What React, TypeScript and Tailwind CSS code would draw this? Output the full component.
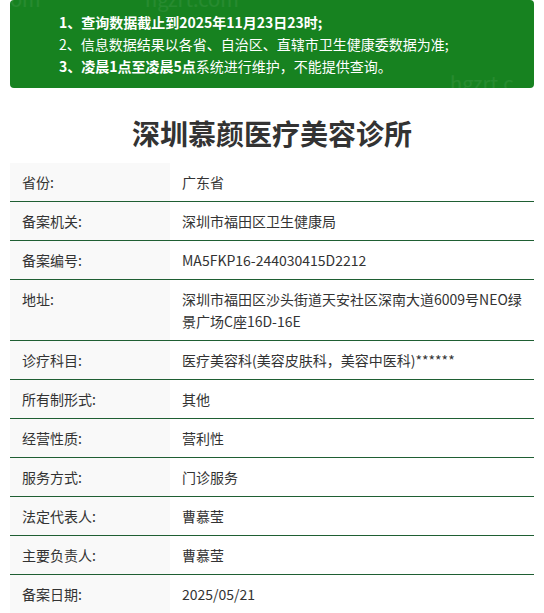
import React from "react";

const rows: [string, string][] = [
  ["省份:", "广东省"],
  ["备案机关:", "深圳市福田区卫生健康局"],
  ["备案编号:", "MA5FKP16-244030415D2212"],
  ["地址:", "深圳市福田区沙头街道天安社区深南大道6009号NEO绿景广场C座16D-16E"],
  ["诊疗科目:", "医疗美容科(美容皮肤科，美容中医科)******"],
  ["所有制形式:", "其他"],
  ["经营性质:", "营利性"],
  ["服务方式:", "门诊服务"],
  ["法定代表人:", "曹慕莹"],
  ["主要负责人:", "曹慕莹"],
  ["备案日期:", "2025/05/21"],
];

export default function App() {
  return (
    <div
      className="w-[544px] h-[613px] overflow-hidden bg-white"
      style={{ fontFamily: '"Noto Sans CJK SC", "Noto Sans", sans-serif' }}
    >
      <div className="px-[10px]">
        <div className="relative overflow-hidden rounded-[4px] bg-[#178220] py-[11px] pl-[49px] pr-2 text-[14px] leading-[22px] text-white">
          <div className="pointer-events-none absolute left-[0px] top-[-12px] text-[20px] text-white/[0.07]">om</div>
          <div className="pointer-events-none absolute left-[135px] top-[-12px] text-[20px] text-white/[0.07]">hgzrt.com</div>
          <div className="pointer-events-none absolute left-[440px] top-[72px] text-[20px] text-white/[0.07]">hgzrt.c</div>
          <div className="relative font-bold">1、查询数据截止到2025年11月23日23时;</div>
          <div className="relative">2、信息数据结果以各省、自治区、直辖市卫生健康委数据为准;</div>
          <div className="relative">
            <span className="font-bold">3、凌晨1点至凌晨5点</span>系统进行维护，不能提供查询。
          </div>
        </div>
        <h1 className="mt-[25px] mb-[10px] text-center text-[28px] font-bold leading-[40px] text-[#333]">
          深圳慕颜医疗美容诊所
        </h1>
        <div className="text-[14px] leading-[22px] text-[#333]">
          {rows.map(([k, v], i) => (
            <div
              key={i}
              className={`flex ${i < rows.length - 1 ? "border-b border-[#1f5f33]" : ""}`}
            >
              <div className="w-[160px] shrink-0 bg-[#f9f9f9] px-3 py-2">{k}</div>
              <div className="flex-1 px-3 py-2">{v}</div>
            </div>
          ))}
        </div>
      </div>
    </div>
  );
}
